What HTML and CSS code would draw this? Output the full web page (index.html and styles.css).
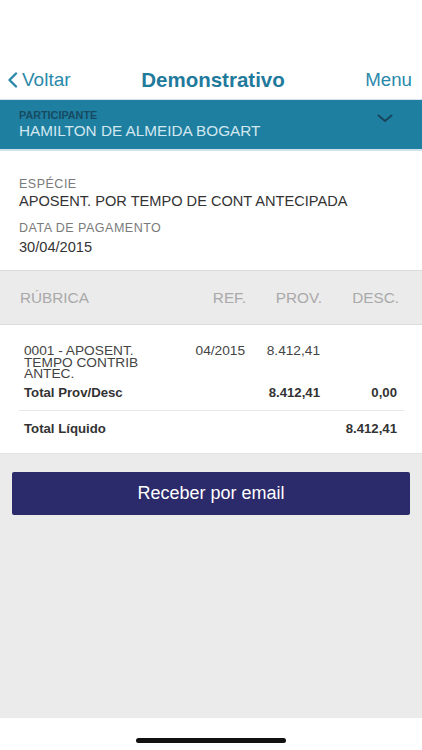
FILE: index.html
```html
<!DOCTYPE html>
<html lang="pt">
<head>
<meta charset="utf-8">
<title>Demonstrativo</title>
<link rel="stylesheet" href="styles.css">
</head>
<body>
<div class="screen">
  <div class="status"></div>
  <header class="nav">
    <div class="nav-left">
      <svg class="back-icon" width="11" height="16" viewBox="0 0 11 16"><path d="M9 1.5 L2.5 8 L9 14.5" fill="none" stroke="currentColor" stroke-width="2.4" stroke-linecap="round" stroke-linejoin="round"/></svg>
      <span>Voltar</span>
    </div>
    <div class="nav-title">Demonstrativo</div>
    <div class="nav-right">Menu</div>
  </header>
  <section class="participant">
    <div class="participant-text">
      <div class="participant-label">PARTICIPANTE</div>
      <div class="participant-name">HAMILTON DE ALMEIDA BOGART</div>
    </div>
    <svg class="chevron" width="16" height="9" viewBox="0 0 16 9"><path d="M1.5 1.5 L8 7 L14.5 1.5" fill="none" stroke="currentColor" stroke-width="2" stroke-linecap="round" stroke-linejoin="round"/></svg>
  </section>
  <section class="info">
    <div class="info-label">ESPÉCIE</div>
    <div class="info-value">APOSENT. POR TEMPO DE CONT ANTECIPADA</div>
    <div class="info-label second">DATA DE PAGAMENTO</div>
    <div class="info-value last">30/04/2015</div>
  </section>
  <div class="thead">
    <span class="th-rub">RÚBRICA</span>
    <span class="th-num">REF.</span>
    <span class="th-num">PROV.</span>
    <span class="th-num">DESC.</span>
  </div>
  <section class="tbody">
    <div class="row item">
      <span class="rub">0001 - APOSENT. TEMPO CONTRIB ANTEC.</span>
      <span class="num">04/2015</span>
      <span class="num">8.412,41</span>
      <span class="num"></span>
    </div>
    <div class="row total">
      <span class="rub">Total Prov/Desc</span>
      <span class="num"></span>
      <span class="num">8.412,41</span>
      <span class="num">0,00</span>
    </div>
    <div class="divider"></div>
    <div class="row total net">
      <span class="rub">Total Líquido</span>
      <span class="num"></span>
      <span class="num"></span>
      <span class="num">8.412,41</span>
    </div>
  </section>
  <main class="fill">
    <button class="email-btn">Receber por email</button>
  </main>
  <footer class="home">
    <div class="home-bar"></div>
  </footer>
</div>
</body>
</html>
```
FILE: styles.css
```css
* { box-sizing: border-box; }
html, body { margin: 0; padding: 0; }
body {
  font-family: "Liberation Sans", Arial, sans-serif;
  background: #fff;
}
.screen {
  width: 422px;
  height: 750px;
  display: flex;
  flex-direction: column;
  overflow: hidden;
}
.status { height: 58px; background: #fff; flex: none; }
.nav {
  height: 42px;
  flex: none;
  display: flex;
  align-items: center;
  justify-content: space-between;
  padding: 2px 10px 0 8px;
  border-bottom: 1px solid #d4e4ea;
  color: #2a89ab;
}
.nav-left {
  display: flex;
  align-items: center;
  gap: 4px;
  font-size: 19px;
  width: 90px;
}
.back-icon { display: block; margin-left: -1px; }
.nav-title {
  font-size: 20.5px;
  font-weight: bold;
  color: #1f7a9c;
  margin-left: 6px;
}
.nav-right {
  font-size: 18.7px;
  width: 90px;
  text-align: right;
}
.participant {
  height: 51px;
  flex: none;
  background: #1f7fa0;
  border-bottom: 2px solid #cfe2ea;
  display: flex;
  justify-content: space-between;
  align-items: flex-start;
  padding: 10px 29px 0 19px;
}
.participant-label {
  font-size: 10.8px;
  font-weight: bold;
  color: #164b63;
  line-height: 11px;
}
.participant-name {
  font-size: 15.3px;
  color: #d2e8f0;
  line-height: 18px;
  margin-top: 1px;
}
.chevron { color: #17455a; margin-top: 4px; }
.info {
  flex: none;
  height: 119px;
  padding: 26px 19px 0;
  background: #fff;
}
.info-label {
  font-size: 12.5px;
  color: #7a7a7a;
  letter-spacing: 0.5px;
  line-height: 14px;
}
.info-label.second { margin-top: 11px; }
.info-value {
  font-size: 14.6px;
  color: #333;
  line-height: 17px;
  margin-top: 2px;
}
.info-value.last { margin-top: 4px; }
.thead {
  flex: none;
  height: 55px;
  background: #ebebeb;
  border-top: 1px solid #dcdcdc;
  border-bottom: 1px solid #dcdcdc;
  display: grid;
  grid-template-columns: 1fr 60px 76px 77px;
  align-items: center;
  padding: 0 23px 0 20px;
  font-size: 15.3px;
  color: #a9a9a9;
}
.th-num { text-align: right; }
.tbody {
  flex: none;
  height: 129px;
  background: #fff;
  padding: 20px 25px 0 24px;
  border-bottom: 1px solid #e2e2e2;
}
.row {
  display: grid;
  grid-template-columns: 140px 81px 75px 77px;
  font-size: 13.7px;
  color: #444;
}
.row .num { text-align: right; }
.item .rub { line-height: 11.7px; }
.item .num { line-height: 11.7px; }
.total {
  font-weight: bold;
  font-size: 13.2px;
  color: #333;
  margin-top: 5px;
  line-height: 15px;
}
.divider {
  height: 1px;
  background: #e8e8e8;
  margin: 10px 0 0 -5px;
  margin-right: -7px;
}
.total.net { margin-top: 10px; }
.fill {
  flex: 1;
  background: #ebebeb;
  padding: 18px 12px 0;
}
.email-btn {
  display: block;
  width: 100%;
  height: 43px;
  border: none;
  border-radius: 2px;
  background: #2b2a6b;
  color: #fff;
  font-family: "Liberation Sans", Arial, sans-serif;
  font-size: 18px;
  padding: 0;
}
.home {
  flex: none;
  height: 32px;
  background: #fff;
  display: flex;
  justify-content: center;
  padding-top: 20px;
}
.home-bar {
  width: 150px;
  height: 5px;
  border-radius: 3px;
  background: #111;
}
```
